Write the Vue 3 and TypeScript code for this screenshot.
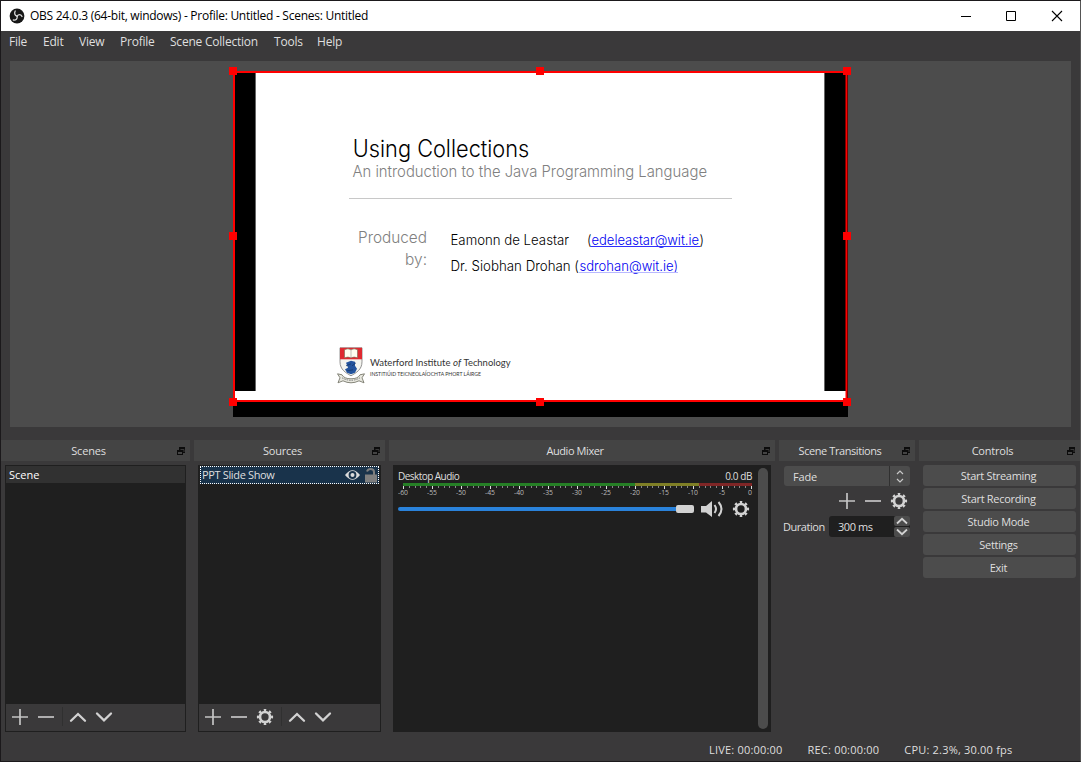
<script setup lang="ts">
import { h } from 'vue'

interface MenuEntry { label: string }

const menu: MenuEntry[] = ['File', 'Edit', 'View', 'Profile', 'Scene Collection', 'Tools', 'Help'].map((label) => ({ label }))
const controls: string[] = ['Start Streaming', 'Start Recording', 'Studio Mode', 'Settings', 'Exit']
const ticks: number[] = Array.from({ length: 61 }, (_, i) => i)
const marks: number[] = Array.from({ length: 13 }, (_, i) => -60 + i * 5)
const handles: [number, number][] = [
  [0, 0], [307, 0], [614, 0],
  [0, 165], [614, 165],
  [0, 331], [307, 331], [614, 331],
]
const tickX = (i: number): number => Math.round(5 + i * 5.8)

const shapes: Record<string, string> = {
  plus: 'M1 9H17M9 1V17',
  minus: 'M1 9H17',
  up: 'M2 12.8L9 6L16 12.8',
  down: 'M2 5.5L9 12.3L16 5.5',
}

const Icon = (props: { name: string }) => {
  if (props.name === 'gear') {
    return h('svg', { viewBox: '0 0 18 18', width: 18, height: 18, fill: 'none', stroke: '#d2d2d2' }, [
      h('circle', { cx: 9, cy: 9, r: 5, 'stroke-width': 2.7 }),
      h('circle', { cx: 9, cy: 9, r: 6.9, 'stroke-width': 2.4, pathLength: 16, 'stroke-dasharray': '0.9 1.1', 'stroke-dashoffset': 0.45 }),
    ])
  }
  const thin = props.name === 'plus' || props.name === 'minus'
  return h('svg', { viewBox: '0 0 18 18', width: 18, height: 18, fill: 'none', stroke: thin ? '#c4c4c4' : '#d2d2d2', 'stroke-width': thin ? 1.7 : 2.3, 'stroke-linecap': thin ? 'butt' : 'round' }, [
    h('path', { d: shapes[props.name] }),
  ])
}
Icon.props = ['name']

const Dock = (props: { title: string }, ctx: { slots: { default?: () => unknown } }) =>
  h('section', { class: 'dock' }, [
    h('header', { class: 'dock-head' }, [
      h('span', { class: 'dock-title' }, props.title),
      h('svg', { class: 'float', viewBox: '0 0 8 8', width: 8, height: 8 }, [
        h('path', { d: 'M2 0H8V6H6V3H2Z', fill: '#0c0c0c' }),
        h('path', { d: 'M3.5 2.5H7V5', fill: 'none', stroke: '#3a3a3a' }),
        h('path', { d: 'M0 3H6V8H0Z', fill: '#0c0c0c' }),
        h('path', { d: 'M1 5H5V7H1Z', fill: '#444' }),
      ]),
    ]),
    ctx.slots.default?.() as never,
  ])
Dock.props = ['title']
</script>

<template>
  <main class="window">
    <header class="titlebar">
      <svg class="logo" width="16" height="16" viewBox="0 0 16 16">
        <circle cx="8" cy="8" r="7.4" fill="#171717" />
        <g fill="none" stroke="#d8d8d8" stroke-width="1.3" stroke-linecap="round">
          <path d="M8.1 8.2C5.8 7.5 5 5.3 6.2 3" />
          <path d="M8.1 8.2C9.5 6 12.2 6.2 13 8.5" />
          <path d="M8.1 8.2C8.7 10.7 7 12.6 4.3 12" />
        </g>
      </svg>
      <span class="caption">OBS 24.0.3 (64-bit, windows) - Profile: Untitled - Scenes: Untitled</span>
      <svg class="winbtns" width="104" height="12" viewBox="0 0 104 12" fill="none" stroke="#000">
        <path d="M1 6.5H11" />
        <path d="M46.5 1.5H55.500V10.5H46.5Z" />
        <path d="M92 1L102 11M102 1L92 11" stroke-width="1.1" />
      </svg>
    </header>

    <nav class="menu">
      <span v-for="m in menu" :key="m.label">{{ m.label }}</span>
    </nav>

    <div class="preview">
      <svg class="canvas" width="623" height="350" viewBox="-4 -4 623 350">
        <rect x="0" y="1" width="615" height="345" fill="#000" />
        <rect x="2" y="2" width="611" height="328" fill="#fff" />
        <rect x="2" y="2" width="20" height="318" fill="#000" />
        <rect x="22" y="2" width="1" height="318" fill="#666" />
        <rect x="591" y="2" width="1" height="318" fill="#666" />
        <rect x="592" y="2" width="21" height="318" fill="#000" />
        <g class="slide">
          <text x="119.800" y="86.300" font-size="23.500" fill="#000" textLength="176.500" lengthAdjust="spacingAndGlyphs">Using Collections</text>
          <text x="119.500" y="106" font-size="15.500" fill="#808080" textLength="354.500" lengthAdjust="spacingAndGlyphs">An introduction to the Java Programming Language</text>
          <rect x="116" y="127" width="383" height="1" fill="#c8c8c8" />
          <text x="125" y="172" font-size="16" fill="#808080" textLength="69" lengthAdjust="spacingAndGlyphs">Produced</text>
          <text x="172" y="194" font-size="16" fill="#808080" textLength="22" lengthAdjust="spacingAndGlyphs">by:</text>
          <text x="217.500" y="174" font-size="14" fill="#000" textLength="118.500" lengthAdjust="spacingAndGlyphs">Eamonn de Leastar</text>
          <text x="354" y="174" font-size="14" fill="#000" textLength="4.500" lengthAdjust="spacingAndGlyphs">(</text>
          <text x="358.500" y="174" font-size="14" fill="#0000f0" textLength="107.500" lengthAdjust="spacingAndGlyphs">edeleastar@wit.ie</text>
          <text x="466.500" y="174" font-size="14" fill="#000" textLength="4.500" lengthAdjust="spacingAndGlyphs">)</text>
          <rect x="358" y="175" width="109" height="1" fill="#3030ff" />
          <text x="217.500" y="199.500" font-size="14" fill="#000" textLength="128.500" lengthAdjust="spacingAndGlyphs">Dr. Siobhan Drohan (</text>
          <text x="346.500" y="199.500" font-size="14" fill="#0000f0" textLength="98.500" lengthAdjust="spacingAndGlyphs">sdrohan@wit.ie)</text>
          <rect x="346" y="201" width="99" height="1" fill="#b8b8ff" />
        </g>
        <g class="crest" transform="translate(0 .8)">
          <path d="M107 276H129V290C129 298 123 301 118 304C113 301 107 298 107 290Z" fill="#f4f4ef" stroke="#777" stroke-width=".8" />
          <path d="M107 276H129V287.500H107Z" fill="#df2930" />
          <path d="M111.500 278Q115 276 118 278Q121 276 124.500 278V286Q121 284.500 118 286Q115 284.500 111.500 286Z" fill="#fffdf0" stroke="#756a50" stroke-width=".6" />
          <path d="M118 278V286" stroke="#999" stroke-width=".6" />
          <path d="M113 291L118 289L122 290L122 294L124 297L122 301L118 302.500L114 301L112 297.500L115 296Z" fill="#24549e" />
          <path d="M113 294L118 292M119 294L123 291M114 299L120 298" stroke="#17386c" stroke-width=".8" />
          <path d="M104.500 302L109 303Q111 307 118 307Q125 307 127 303L131.500 302L129 306L131 311L126 309Q118 313 110 309L105 311L107 306Z" fill="#e8e8df" stroke="#78786c" stroke-width=".9" />
          <path d="M109 306Q118 311 127 306" fill="none" stroke="#777" stroke-width="1" stroke-dasharray="1.500 1" />
        </g>
        <g class="wit">
          <text x="137" y="294.500" font-size="10.300" textLength="80.500" lengthAdjust="spacingAndGlyphs">Waterford Institute</text>
          <text x="220" y="294.500" font-size="10.300" font-style="italic" textLength="8" lengthAdjust="spacingAndGlyphs">of</text>
          <text x="230.500" y="294.500" font-size="10.300" textLength="47" lengthAdjust="spacingAndGlyphs">Technology</text>
          <text x="137" y="304.500" font-size="6" textLength="111" lengthAdjust="spacingAndGlyphs">INSTITIÚID TEICNEOLAÍOCHTA PHORT LÁIRGE</text>
        </g>
        <rect x="1" y="1" width="612.500" height="329" fill="none" stroke="#f00" stroke-width="2" />
        <rect v-for="(p, i) in handles" :key="i" :x="p[0] - 4" :y="p[1] - 4" width="8" height="8" fill="#f00" />
      </svg>
    </div>

    <div class="docks">
      <Dock title="Scenes">
        <div class="list">
          <div class="row scene-row">Scene</div>
          <div class="tools"><Icon name="plus" /><Icon name="minus" /><i class="sep"></i><Icon name="up" /><Icon name="down" /></div>
        </div>
      </Dock>
      <Dock title="Sources">
        <div class="list">
          <div class="row source-row">
            <span>PPT Slide Show</span>
            <svg width="33" height="16" viewBox="0 0 33 16" fill="none">
              <path d="M0 8Q7.500-1.500 15 8Q7.500 17.500 0 8Z" fill="#dcdcdc" />
              <circle cx="7.500" cy="8" r="3.900" fill="#19334b" />
              <circle cx="7.500" cy="8" r="2" fill="#dcdcdc" />
              <path d="M22 4.500Q23 2 25.500 2Q29 2 29 5V8" stroke="#7f7f7f" stroke-width="2" />
              <rect x="20" y="7.500" width="12" height="8" fill="#7f7f7f" />
            </svg>
          </div>
          <div class="tools"><Icon name="plus" /><Icon name="minus" /><Icon name="gear" /><i class="sep"></i><Icon name="up" /><Icon name="down" /></div>
        </div>
      </Dock>
      <Dock title="Audio Mixer" class="tight">
        <div class="mixer">
          <div class="channel">
            <div class="channel-head"><span>Desktop Audio</span><span class="db">0.0 dB</span></div>
            <svg class="meter" width="356" height="15" viewBox="0 0 356 15">
              <rect x="5" width="232" height="3" fill="#267f26" />
              <rect x="237" width="64" height="3" fill="#7f7f26" />
              <rect x="301" width="53" height="3" fill="#7f2626" />
              <rect v-for="t in ticks" :key="t" :x="tickX(t)" y="3" width="1" :height="t % 5 ? 2 : 3" :fill="t % 5 ? '#888' : '#ddd'" />
              <text v-for="(m, i) in marks" :key="m" :x="i === 12 ? 352 : 5 + i * 29" y="12" text-anchor="middle" :textLength="m === 0 ? 4 : m === -5 ? 6 : 10" lengthAdjust="spacingAndGlyphs">{{ m }}</text>
            </svg>
            <div class="volume">
              <div class="track"><div class="thumb"></div></div>
              <svg width="23" height="18" viewBox="0 0 23 18" fill="none">
                <path d="M0 6H5L11 1V17L5 12.500H0Z" fill="#d2d2d2" />
                <path d="M13.500 5Q16.500 9 13.500 13M17.500 2Q23.500 9 17.500 16" stroke="#d2d2d2" stroke-width="2" />
              </svg>
              <Icon name="gear" />
            </div>
          </div>
          <div class="scroll"></div>
        </div>
      </Dock>
      <Dock title="Scene Transitions" class="tight">
        <div class="transitions">
          <div class="combo"><span>Fade</span><svg width="20" height="20" viewBox="0 0 20 20" fill="none" stroke="#c8c8c8" stroke-width="1.200"><path d="M7 8L10 5L13 8M7 13L10 16L13 13" /></svg></div>
          <div class="trans-tools"><Icon name="plus" /><Icon name="minus" /><Icon name="gear" /></div>
          <div class="duration">
            <span>Duration</span>
            <div class="spin">
              <span>300 ms</span>
              <div class="steps">
                <svg width="16" height="10" viewBox="0 0 16 10"><path d="M3 7.500L8 2.800L13 7.500" /></svg>
                <svg width="16" height="10" viewBox="0 0 16 10"><path d="M3 2.500L8 7.200L13 2.500" /></svg>
              </div>
            </div>
          </div>
        </div>
      </Dock>
      <Dock title="Controls">
        <div class="controls"><button v-for="c in controls" :key="c">{{ c }}</button></div>
      </Dock>
    </div>

    <footer class="status"><span>LIVE: 00:00:00</span><span>REC: 00:00:00</span><span>CPU: 2.3%, 30.00 fps</span></footer>
  </main>
</template>

<style>
body { margin: 0; overflow: hidden; background: #3a393a; }
.dock { min-width: 0; }
.dock-head { height: 21px; display: flex; align-items: center; background: #444; padding-right: 5px; }
.dock-title { flex: 1; text-align: center; padding-right: 1px; }
.tight .dock-title { letter-spacing: -0.42px; }
.float { display: block; flex: none; }
</style>

<style scoped>
* { box-sizing: border-box; }
.window { width: 1081px; height: 762px; display: flex; flex-direction: column; background: #3a393a; border: 1px solid #1b191b; border-right-color: #555; color: #dfdfdf; font: 11px/16px "Open Sans", "Noto Sans", sans-serif; letter-spacing: -0.2px; white-space: nowrap; }
svg { display: block; flex: none; }
.titlebar { height: 30px; flex: none; display: flex; align-items: center; background: #fff; color: #000; padding: 0 16px 0 8px; font-size: 12px; letter-spacing: -0.265px; }
.caption { margin-left: 5px; }
.winbtns { margin-left: auto; }
.menu { height: 30px; flex: none; display: grid; grid-template-columns: 34px 36px 41px 50px 104px 43px auto; padding: 3px 0 0 8px; font-size: 12px; letter-spacing: -0.22px; }
.preview { height: 366px; flex: none; margin: 0 9px; background: #4c4c4c; padding: 6px 0 0 219px; }
.slide { font-family: Inter, "Liberation Sans", sans-serif; font-weight: 300; letter-spacing: 0; }
.wit { font-family: Lato, sans-serif; fill: #333; letter-spacing: 0; }
.docks { display: grid; grid-template-columns: 189px 191px 386px 136px 161px; gap: 4px; margin-top: 13px; height: 292px; flex: none; }
.list { height: 267px; margin: 4px 4px 0; border: 1px solid #1f1f1f; background: #1f1f1f; display: flex; flex-direction: column; }
.row { height: 17px; line-height: 18px; flex: none; }
.scene-row { background: #313131; color: #fff; padding-left: 3px; letter-spacing: 0; }
.source-row { height: 18px; margin: 0 1px 0 1px; background: #19334b; border: 1px dotted #fff; padding: 0 0 0 1px; display: flex; align-items: center; justify-content: space-between; letter-spacing: -0.35px; }
.tools { height: 27px; margin-top: auto; background: #3a393a; display: flex; align-items: center; gap: 8px; padding: 0 0 2px 5px; }
.sep { width: 1px; height: 19px; background: #303030; margin: 0 -2px 0 -1px; }
.mixer { height: 267px; margin: 4px 4px 0; background: #1f1f1f; display: flex; padding: 3px 3px 3px 5px; }
.channel { width: 360px; }
.channel-head { height: 15px; display: flex; justify-content: space-between; padding-right: 6px; font-size: 10px; letter-spacing: -0.55px; }
.db { letter-spacing: -0.4px; }
.meter text { font: 7px "Open Sans", sans-serif; fill: #bbb; letter-spacing: 0; }
.volume { height: 18px; margin-top: 2px; display: flex; align-items: center; }
.track { width: 296px; height: 4px; background: #2a82da; display: flex; align-items: center; justify-content: flex-end; border-radius: 2px; margin-right: 7px; }
.thumb { width: 18px; height: 8px; background: #d2d2d2; border-radius: 2px; flex: none; }
.volume svg:last-child { margin-left: 8px; }
.scroll { width: 10px; border-radius: 5px; background: #4c4c4c; }
.transitions { padding: 5px 5px 0; }
.combo { height: 20px; display: flex; background: #4c4c4c; border-radius: 3px; }
.combo span { flex: 1; line-height: 22px; padding-left: 9px; border-right: 1px solid #303030; }
.trans-tools { display: flex; justify-content: flex-end; gap: 8px; padding: 6px 2px 6px 0; }
.duration { display: flex; justify-content: space-between; line-height: 22px; margin-left: -1px; letter-spacing: -0.45px; }
.spin { width: 81px; height: 21px; background: #1f1f1f; border-radius: 3px; display: flex; justify-content: space-between; padding-left: 9px; }
.steps { display: flex; flex-direction: column; gap: 1px; }
.steps svg { background: #4c4c4c; border-radius: 2px; fill: none; stroke: #d2d2d2; stroke-width: 1.800; }
.controls { padding: 4px 4px 0; display: flex; flex-direction: column; gap: 2px; }
button { height: 21px; padding: 0 2px 0 0; border: 0; border-radius: 3px; background: #4c4c4c; color: inherit; font: inherit; letter-spacing: -0.3px; }
.status { flex: 1; display: flex; gap: 25px; align-items: center; padding: 6px 0 0 708px; letter-spacing: 0.2px; }
</style>
